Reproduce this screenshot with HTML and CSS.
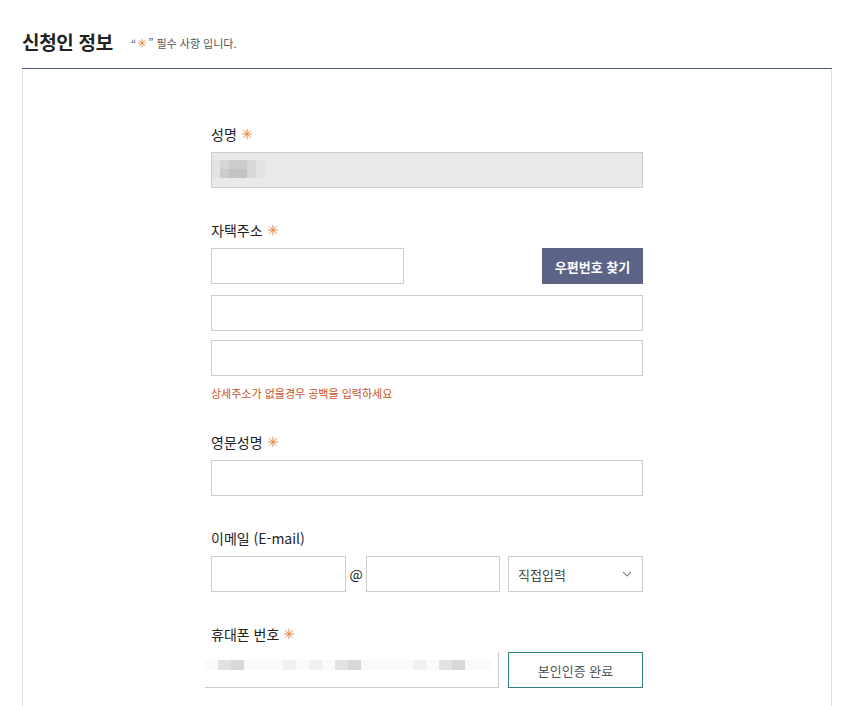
FILE: index.html
```html
<!DOCTYPE html>
<html lang="ko">
<head>
<meta charset="utf-8">
<link rel="stylesheet" href="styles.css">
</head>
<body>
<div class="wrap">
  <div class="head">
    <h2 class="title">신청인 정보</h2>
    <span class="note">“<svg class="star sm" viewBox="0 0 12 12"><path d="M6 1v10M1 6h10M2.5 2.5l7 7M9.5 2.5l-7 7"/></svg>” 필수 사항 입니다.</span>
  </div>
  <div class="panel">
    <div class="form">
      <div class="group">
        <div class="label">성명 <svg class="star" viewBox="0 0 12 12"><path d="M6 1v10M1 6h10M2.5 2.5l7 7M9.5 2.5l-7 7"/></svg></div>
        <div class="input disabled">
          <div class="mosaic">
            <span class="m m1"></span><span class="m m2"></span><span class="m m3"></span><span class="m m2"></span><span class="m m1"></span>
            <span class="m m1"></span><span class="m m3"></span><span class="m m4"></span><span class="m m2"></span><span class="m m1"></span>
          </div>
        </div>
      </div>

      <div class="group gap32">
        <div class="label">자택주소 <svg class="star" viewBox="0 0 12 12"><path d="M6 1v10M1 6h10M2.5 2.5l7 7M9.5 2.5l-7 7"/></svg></div>
        <div class="row between">
          <div class="input zip"></div>
          <button class="btn-dark">우편번호 찾기</button>
        </div>
        <div class="input mt11"></div>
        <div class="input mt9"></div>
        <p class="help">상세주소가 없을경우 공백을 입력하세요</p>
      </div>

      <div class="group">
        <div class="label">영문성명 <svg class="star" viewBox="0 0 12 12"><path d="M6 1v10M1 6h10M2.5 2.5l7 7M9.5 2.5l-7 7"/></svg></div>
        <div class="input"></div>
      </div>

      <div class="group gap32">
        <div class="label">이메일 (E-mail)</div>
        <div class="row">
          <div class="input em1"></div>
          <span class="at">@</span>
          <div class="input em2"></div>
          <div class="input select">
            <span>직접입력</span>
            <svg class="chev" viewBox="0 0 10 6"><path d="M1 1l4 4 4-4"/></svg>
          </div>
        </div>
      </div>

      <div class="group gap32">
        <div class="label">휴대폰 번호 <svg class="star" viewBox="0 0 12 12"><path d="M6 1v10M1 6h10M2.5 2.5l7 7M9.5 2.5l-7 7"/></svg></div>
        <div class="row between">
          <div class="phone">
            <div class="pmos">
              <span class="p p0"></span><span class="p p2"></span><span class="p p3"></span><span class="p p0"></span><span class="p p0"></span><span class="p p0"></span><span class="p p1"></span><span class="p p0"></span><span class="p p1"></span><span class="p p0"></span><span class="p p2"></span><span class="p p3"></span><span class="p p0"></span><span class="p p0"></span><span class="p p0"></span><span class="p p0"></span><span class="p p1"></span><span class="p p0"></span><span class="p p2"></span><span class="p p3"></span><span class="p p0"></span><span class="p p0"></span>
            </div>
          </div>
          <button class="btn-line">본인인증 완료</button>
        </div>
      </div>
    </div>
  </div>
</div>
</body>
</html>
```

FILE: styles.css
```css
* { box-sizing: border-box; }
body {
  margin: 0;
  background: #fff;
  font-family: "Noto Sans CJK KR", "Noto Sans", sans-serif;
  color: #222;
}
.wrap {
  width: 810px;
  margin-left: 22px;
}
.head {
  height: 69px;
  display: flex;
  align-items: center;
  padding-top: 14px;
  border-bottom: 1px solid #4f5b8f;
}
.title {
  margin: 0;
  font-size: 19px;
  font-weight: 700;
  color: #222;
  letter-spacing: -0.3px;
}
.note {
  margin-left: 18px;
  font-size: 11px;
  color: #555;
  display: inline-flex;
  align-items: center;
  padding-top: 3px;
}
.star {
  width: 12px;
  height: 12px;
  fill: none;
  stroke: #e48a45;
  stroke-width: 1;
  margin-left: 4px;
}
.star.sm {
  width: 10px;
  height: 10px;
  margin: 0 1px;
}
.panel {
  border-left: 1px solid #ddd;
  border-right: 1px solid #ddd;
  padding: 55px 0 40px 188px;
}
.form {
  width: 432px;
}
.group + .group {
  margin-top: 31px;
}
.group + .group.gap32 {
  margin-top: 32px;
}
.label {
  height: 20px;
  font-size: 14px;
  line-height: 20px;
  color: #222;
  margin-bottom: 8px;
  display: flex;
  align-items: center;
}
.input {
  height: 36px;
  border: 1px solid #ccc;
  background: #fff;
}
.input.disabled {
  background: #e9e9e9;
  display: flex;
  align-items: center;
}
.mosaic {
  display: grid;
  grid-template-columns: 8px 9px 18px 9px 9px;
  grid-template-rows: 9px 9px;
  margin-top: -2px;
}
.m1 { background: #e3e3e3; }
.m2 { background: #d7d7d7; }
.m3 { background: #cccccc; }
.m4 { background: #c3c3c3; }
.row {
  display: flex;
  align-items: center;
}
.between { justify-content: space-between; }
.zip { width: 193px; }
.btn-dark {
  width: 101px;
  height: 36px;
  border: 0;
  background: #5b6387;
  color: #fff;
  font-family: inherit;
  font-size: 13px;
  font-weight: 700;
}
.mt11 { margin-top: 11px; }
.mt9 { margin-top: 9px; }
.help {
  margin: 9px 0 0;
  font-size: 11px;
  line-height: 16px;
  color: #c9511f;
}
.em1 { width: 135px; }
.at {
  width: 20px;
  text-align: center;
  font-size: 14px;
  color: #222;
}
.em2 { width: 134px; }
.select {
  width: 135px;
  margin-left: 8px;
  display: flex;
  align-items: center;
  justify-content: space-between;
  padding: 0 10px 0 9px;
  font-size: 13px;
  color: #444;
}
.chev {
  width: 10px;
  height: 6px;
  fill: none;
  stroke: #888;
  stroke-width: 1.1;
}
.phone {
  width: 294px;
  height: 36px;
  border-right: 1px solid #ccc;
  border-bottom: 1px solid #ccc;
  display: flex;
  align-items: center;
  margin-left: -6px;
  background: #fff;
}
.pmos {
  display: grid;
  grid-template-columns: repeat(22, 13px);
  grid-template-rows: 10px 10px;
}
.p0 { background: #fafafa; }
.p1 { background: #f0f0f0; }
.p2 { background: #e2e2e2; }
.p3 { background: #d6d9dc; }
.btn-line {
  width: 135px;
  height: 36px;
  border: 1px solid #2f837d;
  background: #fff;
  color: #555;
  font-family: inherit;
  font-size: 13px;
}
```
